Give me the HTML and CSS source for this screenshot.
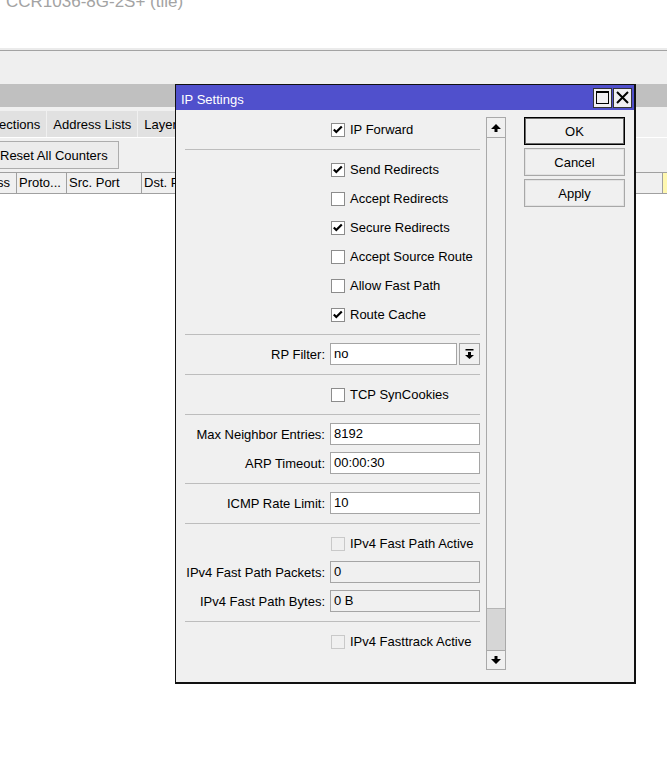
FILE: index.html
```html
<!DOCTYPE html>
<html lang="en">
<head>
  <meta charset="UTF-8">
  <title>IP Settings</title>
  <link rel="stylesheet" href="styles.css">
</head>
<body>

<div class="app">
  <div class="devtitle"><span>CCR1036-8G-2S+ (tile)</span></div>
  <div class="toolbar"></div>
  <div class="winbar"></div>
  <div class="tabs">
    <span class="tab first">Connections</span>
    <span class="tab">Address Lists</span>
    <span class="tab">Layer7 Protocols</span>
  </div>
  <div class="actions">
    <button class="btn">Reset All Counters</button>
  </div>
  <div class="thead">
    <span class="th c1">Address</span>
    <span class="th c2">Proto...</span>
    <span class="th c3">Src. Port</span>
    <span class="th c4">Dst. Port</span>
    <span class="th fill">Packets</span>
    <span class="th mark"></span>
  </div>
</div>

<div class="dialog">
  <div class="titlebar">
    <span class="title">IP Settings</span>
    <span class="tbtn">
      <svg width="13" height="13" viewBox="0 0 13 13"><rect x="0.5" y="0.5" width="12" height="12" fill="#f0eef2" stroke="#000"/><rect x="0" y="0" width="13" height="2" fill="#000"/></svg>
    </span>
    <span class="tbtn">
      <svg width="13" height="13" viewBox="0 0 13 13"><path d="M1 1 L12 12 M12 1 L1 12" stroke="#000" stroke-width="2"/></svg>
    </span>
  </div>

  <div class="dbody">
    <div class="form">
      <div class="row"><span class="lbl"></span><span class="cb on"></span><span class="cbt">IP Forward</span></div>
      <div class="sep"></div>
      <div class="row"><span class="lbl"></span><span class="cb on"></span><span class="cbt">Send Redirects</span></div>
      <div class="row"><span class="lbl"></span><span class="cb"></span><span class="cbt">Accept Redirects</span></div>
      <div class="row"><span class="lbl"></span><span class="cb on"></span><span class="cbt">Secure Redirects</span></div>
      <div class="row"><span class="lbl"></span><span class="cb"></span><span class="cbt">Accept Source Route</span></div>
      <div class="row"><span class="lbl"></span><span class="cb"></span><span class="cbt">Allow Fast Path</span></div>
      <div class="row"><span class="lbl"></span><span class="cb on"></span><span class="cbt">Route Cache</span></div>
      <div class="sep"></div>
      <div class="row">
        <span class="lbl">RP Filter:</span>
        <span class="inp short">no</span>
        <span class="ddbtn">
          <svg width="9" height="10" viewBox="0 0 9 10"><rect x="0.5" y="0" width="8" height="1.5" fill="#000"/><path d="M3 3 H6 V6 H9 L4.5 10 L0 6 H3 Z" fill="#000"/></svg>
        </span>
      </div>
      <div class="sep"></div>
      <div class="row"><span class="lbl"></span><span class="cb"></span><span class="cbt">TCP SynCookies</span></div>
      <div class="sep"></div>
      <div class="row"><span class="lbl">Max Neighbor Entries:</span><span class="inp">8192</span></div>
      <div class="row"><span class="lbl">ARP Timeout:</span><span class="inp">00:00:30</span></div>
      <div class="sep"></div>
      <div class="row"><span class="lbl">ICMP Rate Limit:</span><span class="inp">10</span></div>
      <div class="sep"></div>
      <div class="row"><span class="lbl"></span><span class="cb off"></span><span class="cbt">IPv4 Fast Path Active</span></div>
      <div class="row"><span class="lbl">IPv4 Fast Path Packets:</span><span class="inp ro">0</span></div>
      <div class="row"><span class="lbl">IPv4 Fast Path Bytes:</span><span class="inp ro">0 B</span></div>
      <div class="sep"></div>
      <div class="row"><span class="lbl"></span><span class="cb off"></span><span class="cbt">IPv4 Fasttrack Active</span></div>
    </div>

    <div class="sbar">
      <div class="arrow">
        <svg width="10" height="8" viewBox="0 0 10 8"><path d="M5 0 L10 5 H6.5 V8 H3.5 V5 H0 Z" fill="#000"/></svg>
      </div>
      <div class="track"><div class="thumb"></div></div>
      <div class="arrow down">
        <svg width="10" height="8" viewBox="0 0 10 8"><path d="M3.5 0 H6.5 V3 H10 L5 8 L0 3 H3.5 Z" fill="#000"/></svg>
      </div>
    </div>

    <div class="btns">
      <button class="dbtn def">OK</button>
      <button class="dbtn">Cancel</button>
      <button class="dbtn">Apply</button>
    </div>
  </div>
</div>

</body>
</html>
```

FILE: styles.css
```css
body {
  margin: 0;
  background: #fff;
  font-family: "Liberation Sans", Arial, sans-serif;
  font-size: 13px;
  color: #000;
  width: 667px;
  height: 784px;
  overflow: hidden;
  position: relative;
}

/* background window */
.devtitle {
  height: 48px;
  overflow: hidden;
  border-bottom: 2px solid #ebebeb;
  padding-left: 6px;
}
.devtitle span {
  display: block;
  margin-top: -8px;
  line-height: 20px;
  font-size: 17px;
  color: #a3a3a3;
}
.toolbar { height: 33px; background: #efefef; border-top: 1px solid #a3a3a3; }
.winbar { height: 23px; background: #c0c0c0; }
.tabs {
  display: flex;
  gap: 1px;
  padding-top: 4px;
  background: #f0f0f0;
  border-bottom: 1px solid #fff;
  white-space: nowrap;
  overflow: hidden;
}
.tab {
  background: #e1e1e1;
  padding: 1px 6px 0;
  height: 25px;
  line-height: 26px;
}
.tab.first { margin-left: -38px; }
.actions {
  background: #f0f0f0;
  padding: 3px 0;
  white-space: nowrap;
}
.btn {
  font: inherit;
  height: 28px;
  margin-left: -11px;
  padding: 0 10px;
  background: #ececec;
  border: 1px solid #adadad;
  color: #000;
}
.thead {
  display: flex;
  height: 20px;
  background: #f0f0f0;
  border-top: 1px solid #a0a0a0;
  border-bottom: 1px solid #a0a0a0;
  overflow: hidden;
}
.th {
  line-height: 20px;
  padding-left: 2px;
  border-right: 1px solid #a0a0a0;
  white-space: nowrap;
  overflow: hidden;
  box-sizing: border-box;
}
.c1 { width: 17px; padding-left: 0; padding-right: 6px; direction: rtl; text-align: right; }
.c2 { width: 50px; }
.c3 { width: 75px; }
.c4 { width: 88px; }
.fill { flex: 1; }
.mark { width: 4px; border-right: none; background: #fff8b0; }

/* dialog window */
.dialog {
  position: absolute;
  left: 175px;
  top: 84px;
  width: 458px;
  height: 597px;
  background: #f0f0f0;
  border-style: solid;
  border-color: #111;
  border-width: 1px 2px 2px 1px;
}
.titlebar {
  display: flex;
  align-items: center;
  height: 25px;
  background: #5050cc;
  padding: 0 2px 0 5px;
}
.title { flex: 1; color: #fff; font-size: 13px; padding-top: 3px; }
.tbtn {
  width: 19px;
  height: 20px;
  margin-left: 1px;
  box-sizing: border-box;
  border: 1px solid #333;
  background: #f0eef2;
  display: flex;
  align-items: center;
  justify-content: center;
}

.dbody { display: flex; align-items: flex-start; }
.form { width: 295px; margin-left: 9px; padding-top: 5px; }
.row { display: flex; align-items: center; height: 29px; }
.lbl {
  width: 140px;
  margin-right: 5px;
  text-align: right;
  white-space: nowrap;
}
.sep { height: 1px; background: #bdbdbd; margin: 5px 0; }

.cb {
  width: 14px;
  height: 14px;
  box-sizing: border-box;
  margin-left: 1px;
  border: 1px solid #8c8c8c;
  background: #fff;
}
.cb.on {
  background: #fff url("data:image/svg+xml,%3Csvg xmlns='http://www.w3.org/2000/svg' width='12' height='12'%3E%3Cpath d='M1.8 5.5 L4.3 8 L9.8 2.5' fill='none' stroke='%23000' stroke-width='2.2'/%3E%3C/svg%3E") no-repeat center;
}
.cb.off { border-color: #c9c9c9; background: #f0f0f0; }
.cbt { margin-left: 5px; white-space: nowrap; }

.inp {
  width: 150px;
  height: 22px;
  margin-bottom: 2px;
  box-sizing: border-box;
  border: 1px solid #a5a5a5;
  background: #fff;
  padding-left: 3px;
  line-height: 20px;
}
.inp.short { width: 127px; }
.inp.ro { background: #f0f0f0; }
.ddbtn {
  width: 21px;
  height: 22px;
  margin-left: 2px;
  margin-bottom: 2px;
  box-sizing: border-box;
  border: 1px solid #a5a5a5;
  background: #f0f0f0;
  display: flex;
  align-items: center;
  justify-content: center;
}

.sbar {
  width: 20px;
  height: 553px;
  margin: 7px 0 0 6px;
  box-sizing: border-box;
  border: 1px solid #a9a9a9;
  display: flex;
  flex-direction: column;
}
.arrow {
  height: 19px;
  border-bottom: 1px solid #a9a9a9;
  display: flex;
  align-items: center;
  justify-content: center;
}
.arrow.down { border-bottom: none; border-top: 1px solid #a9a9a9; height: 18px; }
.track { flex: 1; display: flex; flex-direction: column; justify-content: flex-end; }
.thumb { height: 41px; background: #d6d6d6; border-top: 1px solid #b5b5b5; }

.btns { width: 101px; margin: 7px 0 0 18px; display: flex; flex-direction: column; gap: 3px; }
.dbtn {
  font: inherit;
  height: 28px;
  background: #f0f0f0;
  border: 1px solid #a8a8a8;
  box-shadow: inset 0 0 0 1px #e2e2e2;
  color: #000;
  padding: 0;
}
.dbtn.def { border-color: #000; box-shadow: inset 0 0 0 1px #6a6a6a; }
```
